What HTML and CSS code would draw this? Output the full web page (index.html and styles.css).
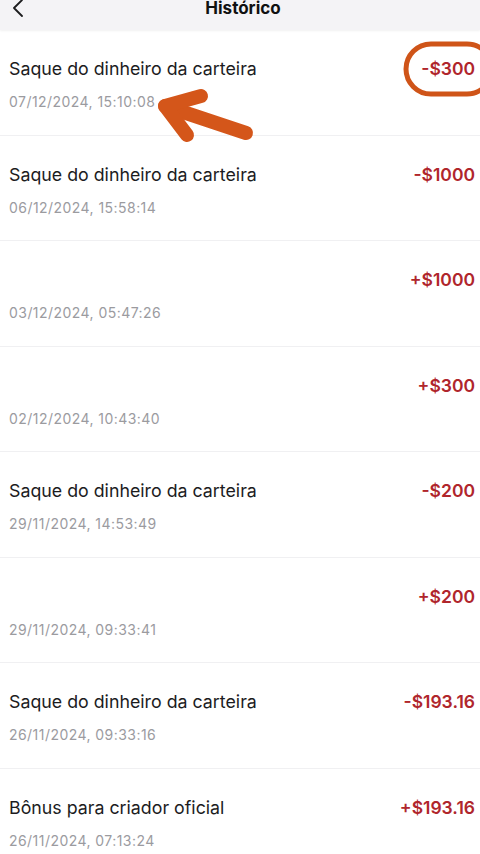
FILE: index.html
```html
<!DOCTYPE html>
<html lang="pt-BR">
<head>
<meta charset="utf-8">
<title>Histórico</title>
<link rel="stylesheet" href="styles.css">
</head>
<body>
<div class="page">
  <header class="nav">
    <div class="nav-inner">
      <svg class="back" width="12" height="20" viewBox="0 0 12 20"><path d="M10 2 L2 10 L10 18" fill="none" stroke="#1c1c1e" stroke-width="1.8" stroke-linecap="round" stroke-linejoin="round"/></svg>
      <h1 class="title">Histórico</h1>
      <span class="spacer"></span>
    </div>
  </header>
  <ul class="list">
    <li class="row">
      <div class="line"><span class="name">Saque do dinheiro da carteira</span><span class="amount">-$300</span></div>
      <div class="date">07/12/2024, 15:10:08</div>
    </li>
    <li class="row">
      <div class="line"><span class="name">Saque do dinheiro da carteira</span><span class="amount">-$1000</span></div>
      <div class="date">06/12/2024, 15:58:14</div>
    </li>
    <li class="row">
      <div class="line"><span class="name"></span><span class="amount">+$1000</span></div>
      <div class="date">03/12/2024, 05:47:26</div>
    </li>
    <li class="row">
      <div class="line"><span class="name"></span><span class="amount">+$300</span></div>
      <div class="date">02/12/2024, 10:43:40</div>
    </li>
    <li class="row">
      <div class="line"><span class="name">Saque do dinheiro da carteira</span><span class="amount">-$200</span></div>
      <div class="date">29/11/2024, 14:53:49</div>
    </li>
    <li class="row">
      <div class="line"><span class="name"></span><span class="amount">+$200</span></div>
      <div class="date">29/11/2024, 09:33:41</div>
    </li>
    <li class="row">
      <div class="line"><span class="name">Saque do dinheiro da carteira</span><span class="amount">-$193.16</span></div>
      <div class="date">26/11/2024, 09:33:16</div>
    </li>
    <li class="row">
      <div class="line"><span class="name">Bônus para criador oficial</span><span class="amount">+$193.16</span></div>
      <div class="date">26/11/2024, 07:13:24</div>
    </li>
  </ul>
  <svg class="mark" width="480" height="160" viewBox="0 0 480 160">
    <rect x="406" y="44" width="86" height="50" rx="25" fill="none" stroke="#cf5418" stroke-width="5"/>
    <g fill="none" stroke="#d4561a" stroke-width="14" stroke-linecap="round" stroke-linejoin="round">
      <path d="M246 133 L165 106"/>
      <path d="M201 96 L165 106 L187 135"/>
    </g>
  </svg>
</div>
</body>
</html>
```
FILE: styles.css
```css
* { box-sizing: border-box; }
html, body { margin: 0; padding: 0; background: #ffffff; }
body { font-family: Inter, "Liberation Sans", sans-serif; color: #1c1c1e; }
.page { position: relative; width: 480px; height: 854px; overflow: hidden; background: #fff; }
.nav { height: 30px; background: #f4f3f6; overflow: hidden; box-shadow: 0 1px 2px rgba(0,0,0,0.06); position: relative; z-index: 1; }
.nav-inner { height: 42px; margin-top: -13px; display: flex; align-items: center; justify-content: space-between; padding: 0 12px; }
.back { display: block; }
.title { margin: 0; font-size: 17px; font-weight: 700; color: #111; transform: translateX(3px); }
.spacer { width: 12px; }
.list { list-style: none; margin: 0; padding: 0; }
.row { height: 105.5px; padding: 27px 5px 0 9px; border-bottom: 1px solid #f0f0f2; }
.line { height: 23px; display: flex; align-items: center; justify-content: space-between; }
.name { font-size: 17.8px; color: #1c1c1e; }
.amount { font-size: 17.5px; font-weight: 600; color: #b0262c; }
.date { margin-top: 13px; line-height: 18px; font-size: 14px; letter-spacing: 0.45px; color: #9b9b9f; }
.mark { position: absolute; left: 0; top: 0; pointer-events: none; }
```
